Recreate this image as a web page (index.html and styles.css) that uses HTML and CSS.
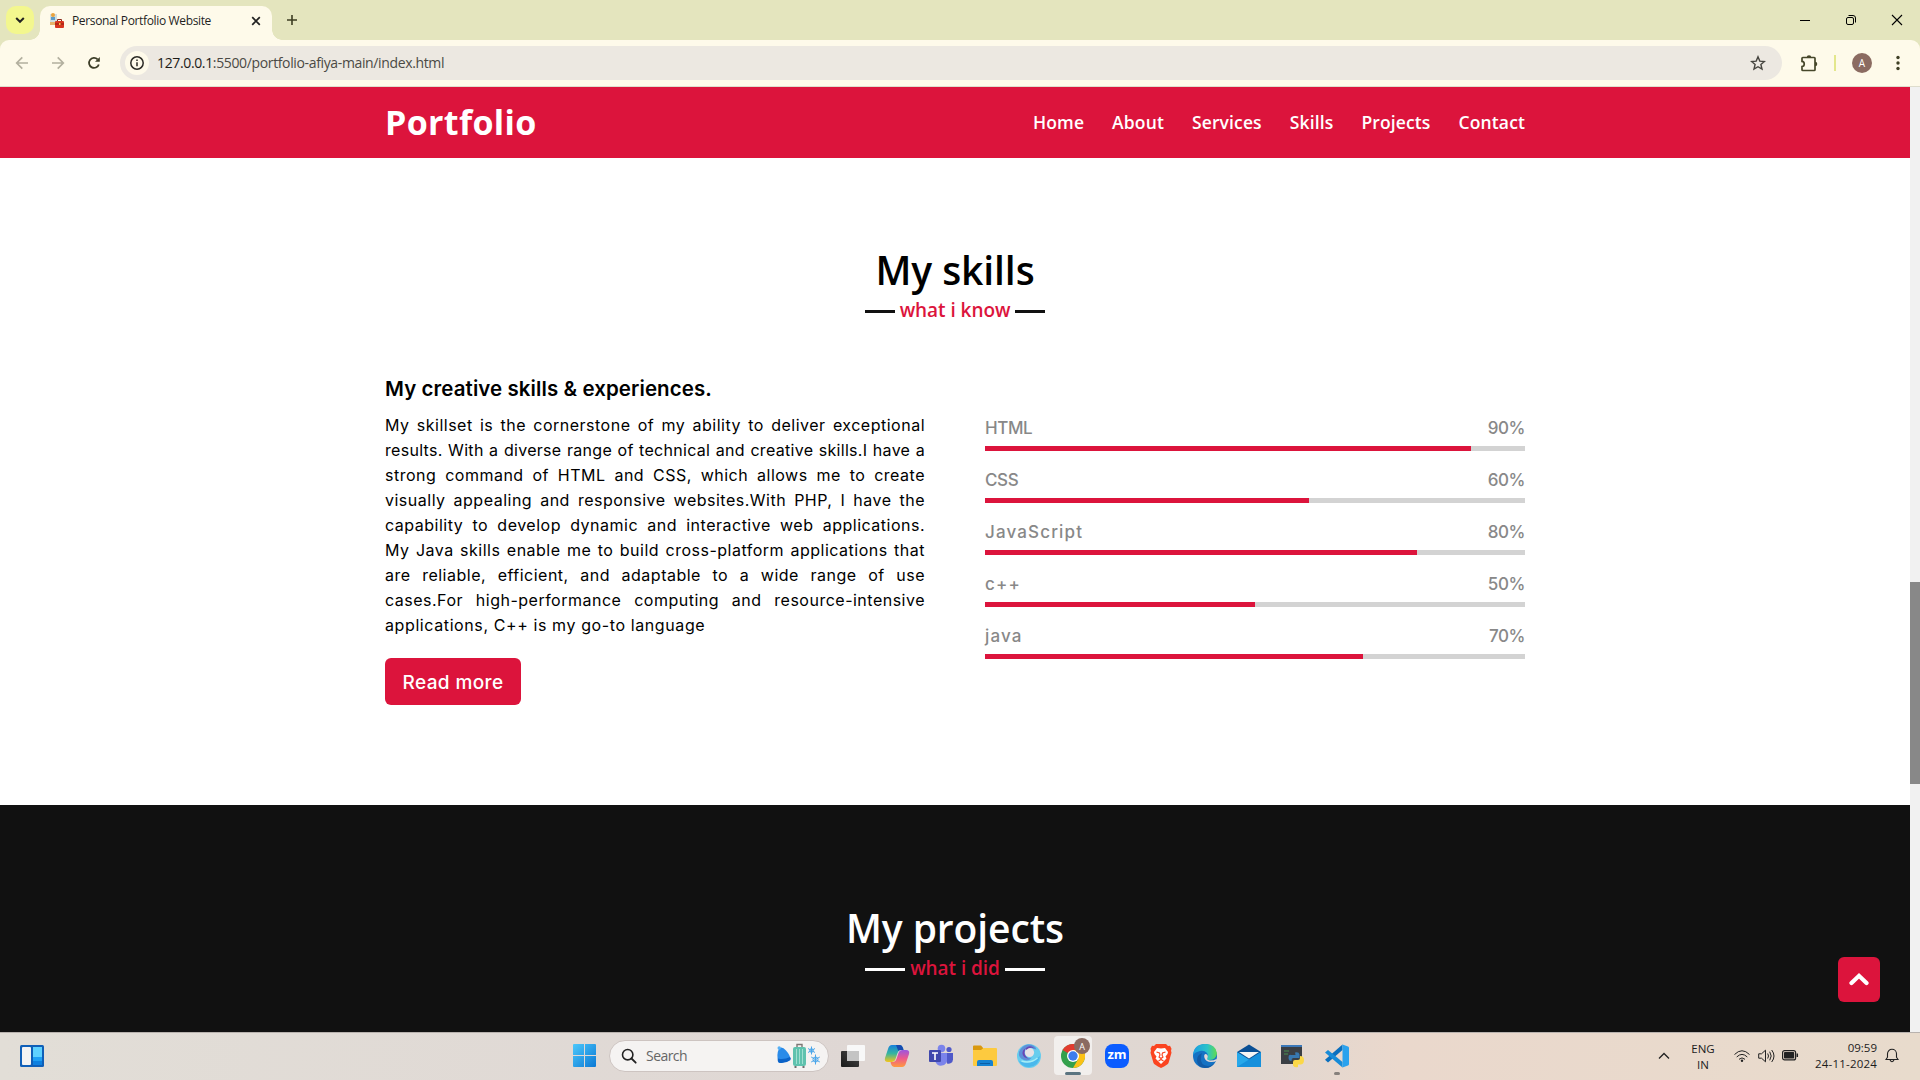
FILE: index.html
```html
<!DOCTYPE html>
<html lang="en">
<head>
<meta charset="utf-8">
<title>Personal Portfolio Website</title>
<link rel="stylesheet" href="styles.css">
</head>
<body>
<div class="screen">
  <header class="tabstrip">
    <button class="tab-search"><svg width="28" height="28" viewBox="0 0 28 28"><path d="M10.200 12l3.800 3.800 3.800-3.800" fill="none" stroke="#222" stroke-width="2"/></svg></button>
    <div class="tab">
      <svg class="favicon" width="16" height="16" viewBox="0 0 16 16"><rect x="1" y="1" width="7" height="10" fill="#cfdde0"/><rect x="2" y="0" width="4" height="4" rx="2" fill="#e9a23b"/><rect x="2" y="4" width="4" height="3" fill="#5c9bc9"/><path d="M1 9h6v3H1z" fill="#e7b36a"/><rect x="6" y="8" width="9" height="7" rx="1" fill="#d8351f"/><path d="M8.500 8V6.500h4V8" fill="none" stroke="#8a2a1c"/><path d="M6 11h9" stroke="#8f1d10"/><rect x="10" y="10" width="1.500" height="2" fill="#f4c542"/></svg>
      <span class="tab-title">Personal Portfolio Website</span>
      <svg class="tab-close" width="10" height="10" viewBox="0 0 10 10"><path d="M1.200 1.200l7.600 7.600M8.800 1.200L1.200 8.800" stroke="#222" stroke-width="1.700"/></svg>
    </div>
    <svg class="new-tab" width="12" height="12" viewBox="0 0 12 12"><path d="M6 1v10M1 6h10" stroke="#3c3d22" stroke-width="1.600"/></svg>
    <div class="win-controls">
      <svg width="46" height="40" viewBox="0 0 46 40"><path d="M18 20.500h10" stroke="#000"/></svg>
      <svg width="46" height="40" viewBox="0 0 46 40"><rect x="18.500" y="17.500" width="7" height="7" rx="1.500" fill="none" stroke="#000"/><path d="M20.500 15.500H25a2.500 2.500 0 0 1 2.500 2.500v4.500" fill="none" stroke="#000"/></svg>
      <svg width="46" height="40" viewBox="0 0 46 40"><path d="M18 15l10 10M28 15L18 25" stroke="#000" stroke-width="1.100"/></svg>
    </div>
  </header>

  <div class="toolbar">
    <svg class="tool" width="36" height="36" viewBox="0 0 36 36"><path d="M24 18H13M18.300 12.400L12.700 18l5.600 5.600" fill="none" stroke="#b3b09f" stroke-width="1.700"/></svg>
    <svg class="tool" width="36" height="36" viewBox="0 0 36 36"><path d="M12 18h11M17.700 12.400l5.600 5.600-5.600 5.600" fill="none" stroke="#b3b09f" stroke-width="1.700"/></svg>
    <svg class="tool" width="36" height="36" viewBox="0 0 36 36"><path d="M22.800 19.400a5 5 0 1 1-1.200-5" fill="none" stroke="#3d3e28" stroke-width="1.800"/><path d="M23.800 12v4.800H19z" fill="#3d3e28"/></svg>
    <div class="omnibox">
      <span class="site-info"><svg width="16" height="16" viewBox="0 0 16 16"><circle cx="8" cy="8" r="6.200" fill="none" stroke="#2b2a25" stroke-width="1.500"/><path d="M8 7.200v4M8 4.400v1.500" stroke="#2b2a25" stroke-width="1.500"/></svg></span>
      <span class="url"><b>127.0.0.1</b>:5500/portfolio-afiya-main/index.html</span>
      <svg class="star" width="16" height="16" viewBox="0 0 16 16"><path d="M8 1.800l1.800 4.300 4.600.4-3.500 3 1.100 4.600L8 11.700l-4 2.400 1.100-4.600-3.500-3 4.600-.4z" fill="none" stroke="#46453f" stroke-width="1.400"/></svg>
    </div>
    <svg class="ext" width="20" height="20" viewBox="0 0 20 20"><path d="M3 5.300a.8.8 0 0 1 .8-.8h11.400a.8.8 0 0 1 .8.800v11.400a.8.8 0 0 1-.8.800H3.800a.8.800 0 0 1-.8-.8v-3.100c3-.4 3-4.800 0-5.200z" fill="none" stroke="#46472a" stroke-width="1.700"/><path d="M7.700 4.500a2.300 2.300 0 0 1 4.600 0zM16 8.700a2.300 2.300 0 0 1 0 4.600z" fill="#46472a"/></svg>
    <span class="divider"></span>
    <span class="avatar">A</span>
    <svg class="menu" width="6" height="18" viewBox="0 0 6 18"><g fill="#3f4025"><circle cx="3" cy="3.500" r="1.700"/><circle cx="3" cy="9" r="1.700"/><circle cx="3" cy="14.500" r="1.700"/></g></svg>
  </div>

  <div class="viewport">
    <main class="page">
      <nav class="navbar">
        <a class="logo">Portfolio</a>
        <ul class="nav-links">
          <li>Home</li>
          <li>About</li>
          <li>Services</li>
          <li>Skills</li>
          <li>Projects</li>
          <li>Contact</li>
        </ul>
      </nav>

      <section class="skills">
        <h2 class="title">My skills</h2>
        <div class="subtitle"><i></i><span>what i know</span><i></i></div>
        <div class="columns">
          <div class="about">
            <h3>My creative skills &amp; experiences.</h3>
            <p>
              <span class="line">My skillset is the cornerstone of my ability to deliver exceptional</span>
              <span class="line tight">results. With a diverse range of technical and creative skills.I have a</span>
              <span class="line">strong command of HTML and CSS, which allows me to create</span>
              <span class="line">visually appealing and responsive websites.With PHP, I have the</span>
              <span class="line">capability to develop dynamic and interactive web applications.</span>
              <span class="line">My Java skills enable me to build cross-platform applications that</span>
              <span class="line">are reliable, efficient, and adaptable to a wide range of use</span>
              <span class="line">cases.For high-performance computing and resource-intensive</span>
              <span class="line last">applications, C++ is my go-to language</span>
            </p>
            <a class="btn">Read more</a>
          </div>
          <div class="bars">
            <div class="bar"><div class="info"><span>HTML</span><span>90%</span></div><div class="track"><div class="fill" style="width:90%"></div></div></div>
            <div class="bar"><div class="info"><span>CSS</span><span>60%</span></div><div class="track"><div class="fill" style="width:60%"></div></div></div>
            <div class="bar"><div class="info"><span class="wide">JavaScript</span><span>80%</span></div><div class="track"><div class="fill" style="width:80%"></div></div></div>
            <div class="bar"><div class="info"><span class="wide">c++</span><span>50%</span></div><div class="track"><div class="fill" style="width:50%"></div></div></div>
            <div class="bar"><div class="info"><span class="wide">java</span><span>70%</span></div><div class="track"><div class="fill" style="width:70%"></div></div></div>
          </div>
        </div>
      </section>

      <section class="projects">
        <h2 class="title">My projects</h2>
        <div class="subtitle"><i></i><span>what i did</span><i></i></div>
      </section>
    </main>
    <div class="scrollbar"><div class="thumb"></div></div>
    <a class="to-top"><svg width="20" height="14" viewBox="0 0 20 14"><path d="M2.500 11L10 3.800l7.500 7.200" fill="none" stroke="#fff" stroke-width="4.200" stroke-linecap="round" stroke-linejoin="miter"/></svg></a>
  </div>

  <footer class="taskbar">
    <div class="task widgets"><svg width="24" height="24" viewBox="0 0 24 24"><rect width="24" height="22" y="1" rx="1.500" fill="#0f5fb8"/><rect x="2" y="3" width="9" height="18" rx="1" fill="#f3f3f3"/><path d="M13 3h9v10h-9z" fill="#5fd2ff"/><path d="M13 13h9v4h-9z" fill="#1ea0f5"/><path d="M13 17h9v4h-9z" fill="#0d80e0"/></svg></div>
    <div class="task start"><svg width="23" height="23" viewBox="0 0 23 23"><defs><linearGradient id="win" x1="0" y1="0" x2="1" y2="1"><stop offset="0" stop-color="#4cc8fb"/><stop offset="1" stop-color="#0b78d4"/></linearGradient></defs><path d="M0 1a1 1 0 0 1 1-1h10v11H0zM12 0h10a1 1 0 0 1 1 1v10H12zM0 12h11v11H1a1 1 0 0 1-1-1zM12 12h11v10a1 1 0 0 1-1 1H12z" fill="url(#win)"/></svg></div>
    <div class="search">
      <svg width="16" height="16" viewBox="0 0 16 16"><circle cx="6.700" cy="6.700" r="5.200" fill="none" stroke="#222" stroke-width="1.600"/><path d="M10.500 10.500l4.200 4.200" stroke="#222" stroke-width="1.800" stroke-linecap="round"/></svg>
      <span>Search</span>
      <svg class="doodle" width="46" height="26" viewBox="0 0 46 26"><path d="M3 5.500Q6 3 10 7.500q4 4.500 4.500 8.500-2 2.500-4.500 2.500-3 1.500-7.500 1Q0 12 3 5.500z" fill="#2a8be9"/><path d="M2 15.500q6 1.500 12-1.500 1.500 2 .2 3.200Q9 21 3 19.800 1 18 2 15.500z" fill="#0c63c8"/><circle cx="3.200" cy="5" r="1.700" fill="#57b0f5"/><path d="M21 4V1.500h5V4" fill="none" stroke="#7c7774" stroke-width="1.400"/><rect x="17" y="4" width="13" height="19" rx="2" fill="#5fc2ae"/><path d="M20.500 6v15M23.500 6v15M26.500 6v15" stroke="#a0dfd1" stroke-width="1"/><path d="M18.500 24h2M26.500 24h2" stroke="#444" stroke-width="1.600"/><g stroke="#4ba6ea" stroke-width="1" fill="none"><path d="M35.500 3.500v8M32 5.500l7 4M39 5.500l-7 4M39.500 11.500v10M35.200 14l8.600 5M43.800 14l-8.600 5"/><circle cx="35.500" cy="7.500" r="1.800"/><circle cx="39.500" cy="16.500" r="2.500"/></g></svg>
    </div>
    <div class="apps">
      <div class="task"><svg width="24" height="24" viewBox="0 0 24 24"><defs><linearGradient id="tv" x1="0" y1="1" x2="1" y2="0"><stop offset="0" stop-color="#191919"/><stop offset="1" stop-color="#484848"/></linearGradient></defs><rect y="7" width="18" height="16" rx="1" fill="url(#tv)"/><rect x="6" y="1" width="18" height="16" rx="1" fill="#f8f8f8"/><path d="M6 7h12v10H6z" fill="#c4c4c4"/></svg></div>
      <div class="task"><svg width="26" height="24" viewBox="0 0 26 24"><defs><linearGradient id="cpa" x1="0" y1="0" x2="0" y2="1"><stop offset="0" stop-color="#1680dd"/><stop offset=".5" stop-color="#35b5a0"/><stop offset="1" stop-color="#f5c518"/></linearGradient><linearGradient id="cpb" x1="0" y1="0" x2="0" y2="1"><stop offset="0" stop-color="#9b55e0"/><stop offset=".5" stop-color="#ee5a8c"/><stop offset="1" stop-color="#ff9a3d"/></linearGradient></defs><path d="M8 1h8q2 0 3 3l.5 2h-3q-2 0-3 3l-2 6q-1 3-4 3H4q-4 0-3-4l3-9Q5 1 8 1z" fill="url(#cpa)"/><path d="M18 23h-8q-2 0-3-3l-.5-2h3q2 0 3-3l2-6q1-3 4-3H22q4 0 3 4l-3 9q-1 4-4 4z" fill="url(#cpb)"/><path d="M12 1h4q2 0 3 3l.5 2h-3q-1.500 0-2.200 1z" fill="#174bb0"/></svg></div>
      <div class="task"><svg width="24" height="24" viewBox="0 0 24 24"><circle cx="12.500" cy="4.500" r="3.800" fill="#7b83eb"/><circle cx="20" cy="5.500" r="2.600" fill="#5059c9"/><path d="M15 9h9v6.500a4.500 4.500 0 0 1-6 4z" fill="#5059c9"/><path d="M7 9h11v7a6 6 0 0 1-11.500 2z" fill="#7b83eb"/><rect y="6" width="12" height="12" rx="1" fill="#4048ad"/><path d="M3 9h6M6 9v7" stroke="#fff" stroke-width="1.600"/></svg></div>
      <div class="task"><svg width="24" height="24" viewBox="0 0 24 24"><path d="M0 2.500A1 1 0 0 1 1 1.500h7l2.500 3L8 7H0z" fill="#d9980f"/><path d="M0 6h8l2.500-2H23a1 1 0 0 1 1 1v16a1 1 0 0 1-1 1H1a1 1 0 0 1-1-1z" fill="#fdca3f"/><path d="M4 22v-4a2 2 0 0 1 2-2h12a2 2 0 0 1 2 2v4z" fill="#1582d2"/><path d="M7 19.500h10" stroke="#0a5ea6"/></svg></div>
      <div class="task"><svg width="24" height="24" viewBox="0 0 24 24"><circle cx="12" cy="12" r="12" fill="#67cdee"/><path d="M2 8Q5 1 11 .5q7 0 8.500 5L17 5q-4-3.500-8 0-3.500 4 0 7.500 3 2.500 6 1-3 4-8 2.500Q1 14 2 8z" fill="#5d8fd8"/><circle cx="12.500" cy="8.500" r="4.600" fill="#e6e1e5"/><path d="M9 4Q5 6 5.500 10q1 4 6 4.500-4-2.500-4-6 0-2.500 1.500-4.500z" fill="#6b45b5"/><path d="M9 4q4-3.500 8.500.5Q13 2.500 9 6z" fill="#6b45b5"/><path d="M2 17q10 5 21-5-1 10-11 11-7 0-10-6z" fill="#4ab8ec"/><path d="M4.500 17q9 3 16-3" fill="none" stroke="#a6edf7" stroke-width="1.500"/></svg></div>
      <div class="task active"><svg width="24" height="24" viewBox="0 0 24 24"><circle cx="12" cy="12" r="12" fill="#34a04c"/><path d="M12 12L1.600 6A12 12 0 0 1 22.400 6z" fill="#e33b2e"/><path d="M12 12V6h10.400A12 12 0 0 1 12 24l5.200-9z" fill="#fbc116"/><circle cx="12" cy="12" r="6" fill="#fff"/><circle cx="12" cy="12" r="4.700" fill="#3b7ded"/></svg><span class="profile">A</span></div>
      <div class="task"><span class="zoom-app">zm</span></div>
      <div class="task"><svg width="22" height="24" viewBox="0 0 22 24"><path d="M6 0h10l2 2 2-.3 1.500 3-.5 2 .5 2-3 10.300Q18 20.500 11 24 4 20.500 3.500 19L.5 8.700l.5-2-.5-2 1.500-3 2 .3z" fill="#fb4420"/><path d="M11 4.500L15 4l3 4-.5 2-2 2.500 1 2-2.500 2.500L11 20l-3-3-2.500-2.500 1-2-2-2.500L4 8l3-4z" fill="#fff"/><path d="M6.500 8l3 1 .5 2-1 2 2 1.500 2-1.500-1-2 .5-2 3-1M8.500 17l2.500-1.500 2.500 1.500" fill="none" stroke="#fb4420" stroke-width="1.100"/></svg></div>
      <div class="task"><svg width="24" height="24" viewBox="0 0 24 24"><defs><linearGradient id="eg" x1="0" y1="0" x2="1" y2="0"><stop offset="0" stop-color="#1b9de2"/><stop offset=".6" stop-color="#2bc3c8"/><stop offset="1" stop-color="#62dc4c"/></linearGradient></defs><circle cx="12" cy="12" r="12" fill="#1472c4"/><path d="M0 11Q1 0 12 0t12 9.500q-1 6-7 6.500-4 0-3-2 2-2 0-5-3-3-7-2-5 1-7 4z" fill="url(#eg)"/><path d="M8 14q-1 7 7 8 4 0 7-4-3 6-10 6Q4 23 4 16q0-5 5-7-1 2-1 5z" fill="#125ba6"/><path d="M12 10q3 0 2.800 3-2 3 2.200 3.500 4 0 6.500-1.500l.5 1.500q-2 1.500-6 1.500-5 0-6.500-4-1-2.500.5-4z" fill="#e3d9d6"/></svg></div>
      <div class="task"><svg width="24" height="24" viewBox="0 0 24 24"><path d="M0 8l12-7.500L24 8z" fill="#0a4f94"/><path d="M0 8h24v15H0z" fill="#27a8ea"/><path d="M0 23l24-15v15z" fill="#1690dc"/><path d="M0 8h24l-12 7.500z" fill="#0a4f94"/><path d="M2 8h20l-10 6.500z" fill="#f5f5f5"/></svg></div>
      <div class="task"><svg width="24" height="24" viewBox="0 0 24 24"><rect y="1" width="21" height="19" fill="#3b3f44"/><path d="M0 1h21v2H0z" fill="#3c78b8"/><path d="M3 7h5M3 10h4" stroke="#4b9150"/><path d="M14 8.500q4-1 4.500 2V14h-6q-2 0-2 3-3 0-3-3.500T10 11h4.500z" fill="#3878b0"/><path d="M19 12q4 0 4 4t-3 4.500h-3V23q-4 1-5-1.500V18q0-2 2-2h3q2 0 2-2z" fill="#fbd848"/></svg></div>
      <div class="task"><svg width="24" height="24" viewBox="0 0 24 24"><path d="M17.500.5V6L3 18.500l-3-2.700z" fill="#0a6fbe"/><path d="M17.500 23.500V18L3 6 0 8.500z" fill="#168bd8"/><path d="M17.500.5L23 2.500q1 .4 1 1.500v16q0 1-1 1.500l-5.500 2z" fill="#2aa2ee"/></svg><i class="running"></i></div>
    </div>
    <div class="tray">
      <svg class="chev" width="12" height="8" viewBox="0 0 12 8"><path d="M1 6.500l5-5 5 5" fill="none" stroke="#222" stroke-width="1.300"/></svg>
      <div class="lang"><span>ENG</span><span>IN</span></div>
      <svg class="wifi" width="16" height="14" viewBox="0 0 16 14"><g fill="none" stroke="#222"><path d="M.5 5.500q7.500-7.500 15 0M2.700 8q5.300-5.200 10.600 0M5 10.300q3-2.800 6 0"/></g><circle cx="8" cy="11.800" r="1.200" fill="#222"/></svg>
      <svg class="vol" width="17" height="14" viewBox="0 0 17 14"><g fill="none" stroke="#222"><path d="M.7 4.800h2.800L7.500 1.200v11.600L3.500 9.200H.7z"/><path d="M9.700 4.500q1.600 2.500 0 5M11.700 2.700q3 4.300 0 8.600M13.700 1q4.600 6 0 12"/></g></svg>
      <svg class="bat" width="17" height="11" viewBox="0 0 17 11"><rect x=".6" y=".6" width="13" height="9.300" rx="2" fill="none" stroke="#222" stroke-width="1.200"/><rect x="2" y="2" width="10.200" height="6.500" rx=".8" fill="#222"/><path d="M15.300 3.500v3.500" stroke="#222" stroke-width="1.500"/></svg>
      <div class="clock"><span>09:59</span><span class="date">24-11-2024</span></div>
      <svg class="bell" width="14" height="15" viewBox="0 0 14 15"><path d="M1 11.500l1.500-2.300V5.800a4.500 4.500 0 0 1 9 0v3.400L13 11.500zM5 12q2 3.500 4 0" fill="none" stroke="#222" stroke-width="1.100"/></svg>
    </div>
  </footer>
</div>
</body>
</html>
```
FILE: styles.css
```css
* { box-sizing: border-box; margin: 0; padding: 0; }
body { width: 1920px; height: 1080px; overflow: hidden; font-family: "Open Sans", "Noto Sans", sans-serif; }
svg { display: block; flex: none; }
button { border: 0; }
.screen { display: flex; flex-direction: column; height: 1080px; background: #e4e5be; }

/* Browser tabs */
.tabstrip { display: flex; height: 40px; padding-left: 6px; background: #e4e5be; }
.tab-search { width: 28px; height: 28px; margin-top: 6px; border-radius: 10px; background: #f3f78e; }
.tab { position: relative; display: flex; align-items: center; width: 232px; height: 34px; margin: 6px 0 0 6px; padding: 0 11px 5px 9px; border-radius: 10px 10px 0 0; background: #fefaea; }
.tab::before, .tab::after { content: ""; position: absolute; bottom: 0; width: 10px; height: 10px; }
.tab::before { left: -10px; background: radial-gradient(circle at 0 0, transparent 9.500px, #fefaea 10px); }
.tab::after { right: -10px; background: radial-gradient(circle at 100% 0, transparent 9.500px, #fefaea 10px); }
.tab-title { margin-left: 7px; font-size: 12px; letter-spacing: -0.353px; color: #1f1f1f; white-space: nowrap; }
.tab-close { margin-left: auto; }
.new-tab { margin: 14px 0 0 14px; }
.win-controls { display: flex; margin-left: auto; }

/* Address bar */
.toolbar { display: flex; align-items: center; height: 47px; padding: 0 19px 1px 4px; border-radius: 9px 9px 0 0; border-bottom: 1px solid #deddcd; background: #fefaea; }
.omnibox { display: flex; align-items: center; width: 1662px; height: 34px; margin-left: 8px; padding: 0 16px 0 5px; border-radius: 17px; background: #ece8e1; }
.site-info { display: grid; place-items: center; width: 24px; height: 24px; border-radius: 50%; background: #fefaea; }
.url { margin-left: 8px; font-size: 14px; letter-spacing: -0.36px; color: #4b4a45; white-space: nowrap; }
.url b { font-weight: 400; color: #1d1c18; }
.star { margin-left: auto; }
.ext { margin-left: 17px; }
.divider { width: 2px; height: 16px; margin-left: 15px; background: #e3e78c; }
.avatar { display: grid; place-items: center; width: 20px; height: 20px; margin-left: 16px; border-radius: 50%; background: #8b6b61; color: #fff; font-size: 10px; }
.menu { margin-left: auto; }
.tool { flex: none; }

/* Page */
.viewport { position: relative; display: flex; height: 945px; overflow: hidden; background: #fff; }
.page { width: 1910px; }
.scrollbar { width: 10px; padding-top: 495px; background: #f1f1f1; }
.thumb { height: 202px; background: #888; }
.navbar { display: flex; align-items: center; justify-content: space-between; height: 71px; padding: 0 385px 2px; background: #dc143c; color: #fff; }
.logo { font-size: 34px; font-weight: 700; letter-spacing: 0.33px; }
.nav-links { display: flex; gap: 28px; list-style: none; font-size: 17.500px; font-weight: 600; letter-spacing: 0.13px; }
.title { height: 60px; font-size: 39px; line-height: 61px; font-weight: 600; letter-spacing: -0.09px; text-align: center; }
.subtitle { display: flex; align-items: center; justify-content: center; width: 180px; height: 22px; margin: 0 auto; gap: 5px; color: #dc143c; font-size: 19px; line-height: 22px; font-weight: 600; letter-spacing: -0.05px; white-space: nowrap; }
.subtitle i { flex: 1; height: 3px; margin-top: 2px; background: #111; }
.skills { height: 647px; padding: 81px 385px 0; background: #fff; }
.columns { display: flex; gap: 60px; margin-top: 52px; font-family: Inter, sans-serif; }
.about, .bars { width: 540px; }
.about h3 { height: 30px; font-size: 20.500px; line-height: 31px; font-weight: 600; letter-spacing: 0.08px; white-space: nowrap; }
.about p { margin: 10px 0 20px; font-size: 16px; line-height: 25px; letter-spacing: 0.5px; }
.line { display: block; height: 25px; text-align: justify; text-align-last: justify; }
.line.tight { letter-spacing: 0.3px; word-spacing: -0.6px; }
.line.last { text-align-last: left; letter-spacing: 0.6px; }
.btn { display: grid; place-items: center; width: 136px; height: 47px; padding-top: 1px; border-radius: 6px; background: #dc143c; color: #fff; font-size: 19px; font-weight: 500; letter-spacing: 0.389px; }
.bars { display: flex; flex-direction: column; gap: 15px; padding-top: 41px; }
.bar { height: 37px; }
.info { display: flex; justify-content: space-between; height: 32px; line-height: 29px; font-size: 17px; font-weight: 500; letter-spacing: -0.4px; color: #888; }
.info .wide { letter-spacing: 1.150px; }
.track { height: 5px; background: #d3d3d3; }
.fill { height: 5px; background: #dc143c; }
.projects { height: 227px; padding-top: 92px; background: #111; color: #fff; }
.projects .subtitle i { background: #fff; }
.to-top { position: absolute; left: 1838px; top: 870px; display: grid; place-items: center; width: 42px; height: 45px; padding-bottom: 2px; border-radius: 6px; background: #dc143c; }

/* Taskbar */
.taskbar { display: flex; align-items: center; height: 48px; padding: 0 21px 2px 10px; border-top: 1px solid #b8b2ae; background: linear-gradient(90deg, #e2ded7, #dfd7d4 45%, #e0d7d1 65%, #ead8cc 73%, #e8dbcc); color: #1c1c1c; }
.task { position: relative; display: grid; place-items: center; flex: none; width: 44px; height: 45px; }
.start { margin-left: 508px; }
.search { display: flex; align-items: center; width: 220px; height: 32px; margin: 0 2px 0 3px; padding: 0 6px 0 11px; border: 1px solid #cdc4c1; border-radius: 16px; background: #f5f3f2; color: #666; font-size: 14px; letter-spacing: -0.55px; }
.search span { margin-left: 9px; }
.doodle { margin-left: auto; }
.apps { display: flex; }
.active::before { content: ""; position: absolute; left: 3px; top: 3px; width: 38px; height: 39px; border-radius: 4px; background: #f2efed; }
.active svg { position: relative; }
.active::after { content: ""; position: absolute; left: 14px; bottom: 3px; width: 16px; height: 3px; border-radius: 2px; background: #5b7480; }
.profile { position: absolute; left: 23px; top: 5px; display: grid; place-items: center; width: 16px; height: 16px; border-radius: 50%; background: #8b6b61; color: #fff; font-size: 9px; }
.zoom-app { display: grid; place-items: center; width: 24px; height: 24px; padding-bottom: 3px; border-radius: 8px; background: #0b5cff; color: #fff; font-size: 13px; line-height: 18px; font-weight: 700; }
.running { position: absolute; left: 19px; bottom: 3px; width: 6px; height: 3px; border-radius: 2px; background: #86807c; }
.tray { display: flex; align-items: center; margin-left: auto; font-size: 11.500px; line-height: 16px; }
.lang, .clock { display: flex; flex-direction: column; }
.lang { align-items: center; width: 30px; margin-left: 18px; padding-top: 2px; }
.wifi { margin-left: 16px; }
.vol { margin-left: 8px; }
.bat { margin-left: 7px; }
.clock { align-items: flex-end; width: 70px; margin-left: 8px; }
.date { letter-spacing: 0.198px; }
.bell { margin-left: 8px; }
```
